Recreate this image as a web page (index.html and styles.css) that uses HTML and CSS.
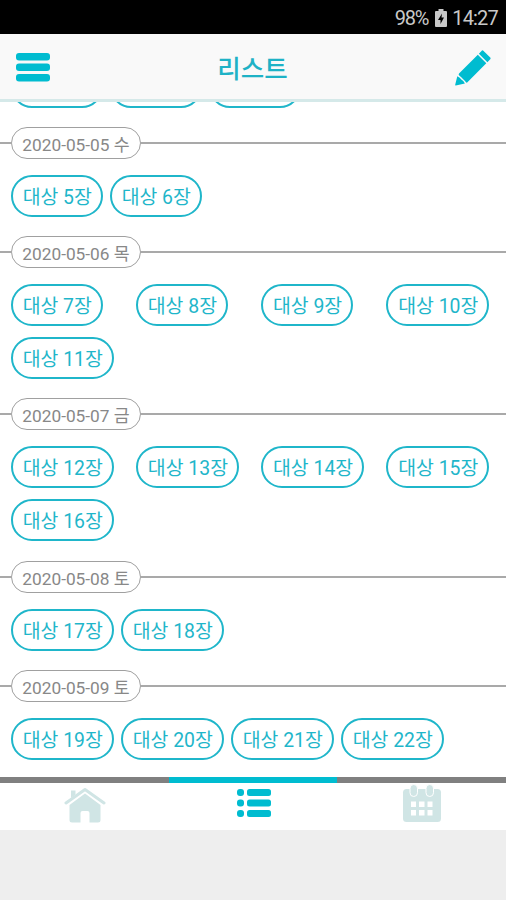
FILE: index.html
```html
<!DOCTYPE html>
<html lang="ko">
<head>
    <meta charset="UTF-8">
    <meta name="viewport" content="width=device-width, initial-scale=1.0">
    <title>리스트</title>
    <link rel="stylesheet" href="styles.css">
</head>
<body>
    <!-- Status bar -->
    <div class="status-bar">
        <span class="battery-level">98%</span>
        <svg class="battery-icon" viewBox="0 0 12 18">
            <path fill="#c8c8c8" d="M3.500 0h5v2H11q1 0 1 1v14q0 1-1 1H1q-1 0-1-1V3q0-1 1-1h2.500z"/>
            <path fill="#000" d="M7 4.500L3 11h2.500v4L9 8.500H6.500z"/>
        </svg>
        <span class="clock">14:27</span>
    </div>

    <!-- Header -->
    <header class="header">
        <svg class="menu-icon" viewBox="0 0 34 29">
            <rect width="34" height="7.500" rx="3"/>
            <rect y="10.500" width="34" height="7.500" rx="3"/>
            <rect y="21" width="34" height="7.500" rx="3"/>
        </svg>
        <h1 class="title">리스트</h1>
        <svg class="edit-icon" viewBox="0 0 36 36">
            <path d="M26.500 0.900Q27.500 -0.200 28.600 0.900L35 7.300Q36.200 8.500 35 9.600L32.400 12.200L23.900 3.700z"/>
            <path d="M22.800 4.800L31.300 13.300L12.200 32.400Q11.600 32.900 11 32.300L9.500 30.500L6 27L4.200 25.500Q3.200 24.700 4 23.600z"/>
            <path d="M2.300 26.200Q5.200 27.500 6.300 29.500Q8.500 30.800 9.900 33.400L0.800 35.500Q0 35.600 0.200 34.800z"/>
        </svg>
    </header>

    <!-- List -->
    <main class="list">
        <section class="day">
            <div class="chips">
                <span class="chip"></span>
                <span class="chip"></span>
                <span class="chip"></span>
            </div>
        </section>
        <section class="day">
            <h2 class="date"><span>2020-05-05 수</span></h2>
            <div class="chips">
                <span class="chip">대상 5장</span>
                <span class="chip">대상 6장</span>
            </div>
        </section>
        <section class="day">
            <h2 class="date"><span>2020-05-06 목</span></h2>
            <div class="chips spread">
                <span class="chip">대상 7장</span>
                <span class="chip">대상 8장</span>
                <span class="chip">대상 9장</span>
                <span class="chip wide">대상 10장</span>
            </div>
            <div class="chips">
                <span class="chip wide">대상 11장</span>
            </div>
        </section>
        <section class="day">
            <h2 class="date"><span>2020-05-07 금</span></h2>
            <div class="chips spread">
                <span class="chip wide">대상 12장</span>
                <span class="chip wide">대상 13장</span>
                <span class="chip wide">대상 14장</span>
                <span class="chip wide">대상 15장</span>
            </div>
            <div class="chips">
                <span class="chip wide">대상 16장</span>
            </div>
        </section>
        <section class="day">
            <h2 class="date"><span>2020-05-08 토</span></h2>
            <div class="chips">
                <span class="chip wide">대상 17장</span>
                <span class="chip wide">대상 18장</span>
            </div>
        </section>
        <section class="day">
            <h2 class="date"><span>2020-05-09 토</span></h2>
            <div class="chips">
                <span class="chip wide">대상 19장</span>
                <span class="chip wide">대상 20장</span>
                <span class="chip wide">대상 21장</span>
                <span class="chip wide">대상 22장</span>
            </div>
        </section>
    </main>

    <!-- Tabs -->
    <nav class="tabs">
        <a class="tab">
            <svg class="home-icon" viewBox="0 0 42 36">
                <path d="M7 3.500h4.500v4L7 11z"/>
                <path fill="none" stroke="#d0e5e5" stroke-width="3" stroke-linecap="round" stroke-linejoin="round" d="M2 16L21 2.500L40 16"/>
                <path d="M21 6.500L36.500 18V33q0 2.500-2.500 2.500H25.500V26q0-2-2-2h-5q-2 0-2 2v9.500H8q-2.500 0-2.500-2.500V18z"/>
            </svg>
        </a>
        <a class="tab active">
            <svg class="list-icon" viewBox="0 0 34 28">
                <rect width="7" height="7" rx="3"/>
                <rect x="10" width="24" height="7" rx="2.500"/>
                <rect y="10.500" width="7" height="7" rx="3"/>
                <rect x="10" y="10.500" width="24" height="7" rx="2.500"/>
                <rect y="21" width="7" height="7" rx="3"/>
                <rect x="10" y="21" width="24" height="7" rx="2.500"/>
            </svg>
        </a>
        <a class="tab">
            <svg class="calendar-icon" viewBox="0 0 38 38">
                <rect y="5" width="38" height="33" rx="3.500"/>
                <g stroke="#fff" stroke-width="1">
                    <rect x="7" y="0.500" width="7.500" height="12" rx="3.750"/>
                    <rect x="23" y="0.500" width="7.500" height="12" rx="3.750"/>
                </g>
                <path fill="#fff" d="M8 17.500h5v5.500h-5zM16 17.500h5.500v5.500h-5.500zM24.500 17.500h5v5.500h-5zM8 26h5v5.500h-5zM16 26h5.500v5.500h-5.500zM24.500 26h5v5.500h-5z"/>
            </svg>
        </a>
    </nav>
</body>
</html>
```
FILE: styles.css
```css
* {
    margin: 0;
    padding: 0;
    box-sizing: border-box;
}

body {
    font-family: Roboto, 'Noto Sans CJK KR', sans-serif;
    background: #eee;
    height: 100vh;
    overflow: hidden;
}

/* Status bar */
.status-bar {
    display: flex;
    justify-content: flex-end;
    align-items: center;
    height: 34px;
    padding: 2px 8px 0 0;
    background: #000;
    color: #c8c8c8;
    font-size: 20px;
}

.battery-level {
    letter-spacing: -1.2px;
}

.battery-icon {
    width: 12px;
    height: 18px;
    margin: 0 5px 0 7px;
}

.clock {
    letter-spacing: -0.8px;
}

/* Header */
.header {
    display: flex;
    justify-content: space-between;
    align-items: center;
    height: 68px;
    padding: 2px 15px 0 16px;
    background: #f9f9f9;
    border-bottom: 3px solid #d5e9e9;
    fill: #00bcd0;
}

.menu-icon {
    width: 34px;
    height: 29px;
}

.title {
    padding-top: 3px;
    color: #1eb2c6;
    font-size: 25.5px;
    font-weight: 500;
    line-height: 36px;
}

.edit-icon {
    width: 36px;
    height: 36px;
}

/* List */
.list {
    display: flex;
    flex-direction: column;
    justify-content: flex-end;
    height: 675px;
    padding-bottom: 17px;
    background: #fff;
    overflow: hidden;
}

.day {
    flex-shrink: 0;
    margin-top: 19.3px;
}

.date {
    display: flex;
    align-items: center;
    height: 32px;
    margin-bottom: 16px;
    color: #888;
    font-size: 17.3px;
    font-weight: 400;
}

.date::before,
.date::after {
    content: '';
    width: 11px;
    height: 2px;
    background: #a9a9a9;
}

.date::after {
    flex: 1;
}

.date span {
    width: 130px;
    height: 32px;
    border: 1.5px solid #a0a0a0;
    border-radius: 16px;
    line-height: 34px;
    text-align: center;
    white-space: nowrap;
}

.chips {
    display: flex;
    gap: 7.5px;
    padding: 0 17px 0 11px;
}

.chips + .chips {
    margin-top: 11px;
}

.spread {
    justify-content: space-between;
}

.chip {
    width: 91.5px;
    height: 42px;
    padding-left: 1px;
    border: 2px solid #1fb6ca;
    border-radius: 21px;
    color: #1fb6ca;
    font-size: 19.4px;
    line-height: 42px;
    text-align: center;
    white-space: nowrap;
}

.wide {
    width: 102.5px;
}

/* Tabs */
.tabs {
    display: flex;
    height: 53px;
    background: #fff;
}

.tab {
    display: flex;
    justify-content: center;
    flex: 1;
    border-top: 6px solid #808080;
    fill: #d0e5e5;
}

.active {
    border-color: #00bcd0;
    fill: #00bcd0;
}

.home-icon {
    width: 42px;
    height: 36px;
    margin: 4px 0 0 1px;
}

.list-icon {
    width: 34px;
    height: 28px;
    margin: 6px 0 0 1px;
}

.calendar-icon {
    width: 38px;
    height: 38px;
    margin-top: 1px;
    overflow: visible;
}
```
